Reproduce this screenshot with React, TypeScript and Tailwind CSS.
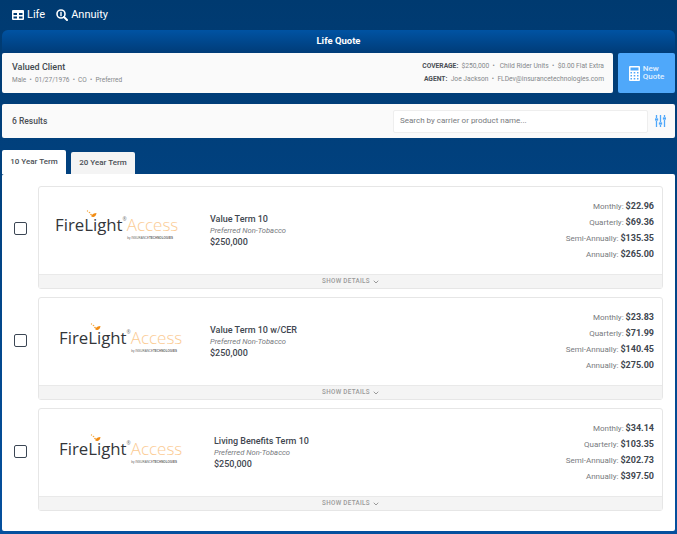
import {ChevronDown} from "lucide-react";

const quotes = [
    {
        name: "Value Term 10",
        logoPad: "pl-[16px] pb-[8px]",
        checkPad: "pb-[19px]",
        namePad: "w-[171px]",
        monthly: "$22.96",
        quarterly: "$69.36",
        semi: "$135.35",
        annual: "$265.00",
    },
    {
        name: "Value Term 10 w/CER",
        logoPad: "pl-[20px] pb-[3px]",
        checkPad: "pb-[17px]",
        namePad: "w-[171px]",
        monthly: "$23.83",
        quarterly: "$71.99",
        semi: "$140.45",
        annual: "$275.00",
    },
    {
        name: "Living Benefits Term 10",
        logoPad: "pl-[20px] pb-[3px]",
        checkPad: "pb-[17px]",
        namePad: "w-[175px]",
        monthly: "$34.14",
        quarterly: "$103.35",
        semi: "$202.73",
        annual: "$397.50",
    },
];

function Logo() {
    return (
        <div className="relative w-[118px] h-[40px]">
            <svg className="absolute left-[31px] top-[3px]" width="11" height="9" viewBox="0 0 11 9">
                <circle cx="1.500" cy="1" r="0.7" fill="#f7a941"/>
                <circle cx="3.500" cy="2.500" r="0.8" fill="#f7a941"/>
                <circle cx="5" cy="4.500" r="0.8" fill="#f59a23"/>
                <path d="M5 6 Q7 3 10.500 3 Q10 6.500 7.500 7 Q6 7.300 5 6Z" fill="#f28c13"/>
            </svg>
            <div className="absolute left-0 top-[6px] flex items-start font-['Open_Sans',sans-serif] text-[16.800px] leading-[24px] whitespace-nowrap">
                <span className="text-[#33363a]">FireLight</span>
                <span className="text-[#777] text-[5px] leading-[12px]">®</span>
                <span className="text-[#fbcb94] text-[17px] font-light">Access</span>
            </div>
            <div className="absolute right-0 top-[29px] text-[3px] leading-[4px] text-[#666] whitespace-nowrap font-['Liberation_Sans',sans-serif]">
                by INSURANCE<b>TECHNOLOGIES</b>
            </div>
        </div>
    );
}

function Premium({label, value}: {label: string; value: string}) {
    return (
        <div className="h-[16px] leading-[16px] whitespace-nowrap">
            <span className="text-[#777a7e] text-[8px]">{label}:&nbsp;</span>
            <span className="text-[#3f4750] text-[9px] font-bold">{value}</span>
        </div>
    );
}

function QuoteRow({quote}: {quote: typeof quotes[number]}) {
    return (
        <div className="flex items-center">
            <div className={`w-[36px] flex justify-center ${quote.checkPad}`}>
                <div className="w-[13px] h-[13px] rounded-[2px] border-[1.500px] border-[#3b4654] bg-white"/>
            </div>
            <div className="w-[625px] h-[103px] border border-[#e6e6e6] rounded-[3px] flex flex-col">
                <div className="flex-1 flex items-center">
                    <div className={`${quote.namePad} ${quote.logoPad} shrink-0`}>
                        <Logo/>
                    </div>
                    <div className="flex-1">
                        <div className="text-[9px] leading-[12px] font-medium text-[#3f4750]">{quote.name}</div>
                        <div className="text-[7.600px] leading-[11px] italic text-[#777a7e]">Preferred Non-Tobacco</div>
                        <div className="text-[9px] leading-[13px] font-medium text-[#3f4750]">$250,000</div>
                    </div>
                    <div className="pr-[8px] flex flex-col items-end pb-[5px]">
                        <Premium label="Monthly" value={quote.monthly}/>
                        <Premium label="Quarterly" value={quote.quarterly}/>
                        <Premium label="Semi-Annually" value={quote.semi}/>
                        <Premium label="Annually" value={quote.annual}/>
                    </div>
                </div>
                <div className="h-[14px] bg-[#f4f4f4] border-t border-[#e9e9e9] flex items-center justify-center gap-[2px] text-[6.300px] tracking-[0.3px] font-medium text-[#9a9a9a] pl-[1px]">
                    SHOW DETAILS
                    <ChevronDown size={8} strokeWidth={3}/>
                </div>
            </div>
        </div>
    );
}

export default function App() {
    return (
        <div className="w-[677px] h-[534px] overflow-hidden bg-gradient-to-b from-[#003a70] to-[#05509e] font-['Roboto',sans-serif] px-[2px]">
            <nav className="h-[30px] flex items-center gap-[11px] pl-[10px] text-white text-[11px]">
                <div className="flex items-center gap-[3px]">
                    <svg width="12" height="10" viewBox="0 0 12 10">
                        <path fillRule="evenodd" fill="white" d="M1 0H11Q12 0 12 1V9Q12 10 11 10H1Q0 10 0 9V1Q0 0 1 0ZM1.500 3V5H5V3ZM7 3V5H10.500V3ZM1.500 6.500V8.500H5V6.500ZM7 6.500V8.500H10.500V6.500Z"/>
                    </svg>
                    <span>Life</span>
                </div>
                <div className="flex items-center gap-[3px]">
                    <svg width="12" height="12" viewBox="0 0 12 12">
                        <circle cx="5" cy="5" r="4" fill="none" stroke="white" strokeWidth="1.600"/>
                        <rect x="4.300" y="2.800" width="1.400" height="4.400" fill="white"/>
                        <path d="M8 8L11 11" stroke="white" strokeWidth="2" strokeLinecap="round"/>
                    </svg>
                    <span>Annuity</span>
                </div>
            </nav>
            <div className="h-[23px] rounded-t-[6px] bg-gradient-to-b from-[#0053a3] to-[#003c78] flex items-center justify-center text-white text-[9.500px] font-bold">
                Life Quote
            </div>
            <div className="flex gap-[5px] h-[40px]">
                <div className="w-[611px] bg-[#fafafa] rounded-[2px] flex justify-between items-center pl-[10px] pr-[9px]">
                    <div>
                        <div className="text-[9px] leading-[14px] font-medium text-[#444a50]">Valued Client</div>
                        <div className="text-[6.500px] leading-[11px] mt-[1px] text-[#85888b]">Male&nbsp; •&nbsp; 01/27/1976&nbsp; •&nbsp; CO&nbsp; •&nbsp; Preferred</div>
                    </div>
                    <div className="text-right text-[6.700px] text-[#85888b] leading-[13px]">
                        <div><b className="font-bold text-[#4a4f55]">COVERAGE:</b>&nbsp; $250,000&nbsp; •&nbsp;&nbsp; Child Rider Units&nbsp; •&nbsp; $0.00 Flat Extra</div>
                        <div><b className="font-bold text-[#4a4f55]">AGENT:</b>&nbsp; Joe Jackson&nbsp; •&nbsp; FLDev@insurancetechnologies.com</div>
                    </div>
                </div>
                <div className="w-[57px] bg-[#4fa8fa] rounded-[2px] flex items-center justify-center gap-[3px] text-[#e3f1ff] text-[8px] leading-[8px] font-medium">
                    <svg width="11" height="15" viewBox="0 0 11 15">
                        <path fillRule="evenodd" fill="white" d="M1 0H10Q11 0 11 1V14Q11 15 10 15H1Q0 15 0 14V1Q0 0 1 0ZM1.500 1.500V4.500H9.500V1.500ZM1.500 6V7.500H3V6ZM4.700 6V7.500H6.300V6ZM8 6V7.500H9.500V6ZM1.500 9V10.500H3V9ZM4.700 9V10.500H6.300V9ZM8 9V10.500H9.500V9ZM1.500 12V13.500H3V12ZM4.700 12V13.500H6.300V12ZM8 12V13.500H9.500V12Z"/>
                    </svg>
                    <div>New<br/>Quote</div>
                </div>
            </div>
            <div className="mt-[11px] h-[34px] bg-[#fafafa] rounded-[2px] flex items-center pl-[10px] pr-[9px]">
                <span className="text-[8.500px] font-medium text-[#4a4f55]">6 Results</span>
                <div className="ml-auto w-[255px] h-[23px] bg-white border border-[#eeeeee] rounded-[2px] flex items-center pl-[6px] text-[8px] text-[#777a7e]">
                    Search by carrier or product name...
                </div>
                <svg className="ml-[7px]" width="11" height="12" viewBox="0 0 11 12" stroke="#4fa8fa" strokeWidth="1.300" fill="#4fa8fa">
                    <path d="M1.500 0V3M1.500 6V12M5.500 0V7M5.500 10V12M9.500 0V2M9.500 5V12" fill="none"/>
                    <rect x="0.500" y="4" width="2" height="1"/>
                    <rect x="4.500" y="8" width="2" height="1"/>
                    <rect x="8.500" y="3" width="2" height="1"/>
                </svg>
            </div>
            <div className="mt-[12px] h-[24px] flex items-end gap-[5px]">
                <div className="w-[64px] h-[24px] bg-white rounded-t-[2px] flex items-center justify-center pb-[1px] text-[8px] font-medium text-[#4a4f55]">10 Year Term</div>
                <div className="w-[64px] h-[22px] bg-[#f4f4f4] rounded-t-[2px] flex items-center justify-center text-[8px] font-medium text-[#4a4f55]">20 Year Term</div>
            </div>
            <div className="h-[357px] bg-white rounded-[2px] pt-[12px] flex flex-col gap-[8px]">
                {quotes.map(quote => <QuoteRow key={quote.name} quote={quote}/>)}
            </div>
        </div>
    );
}
